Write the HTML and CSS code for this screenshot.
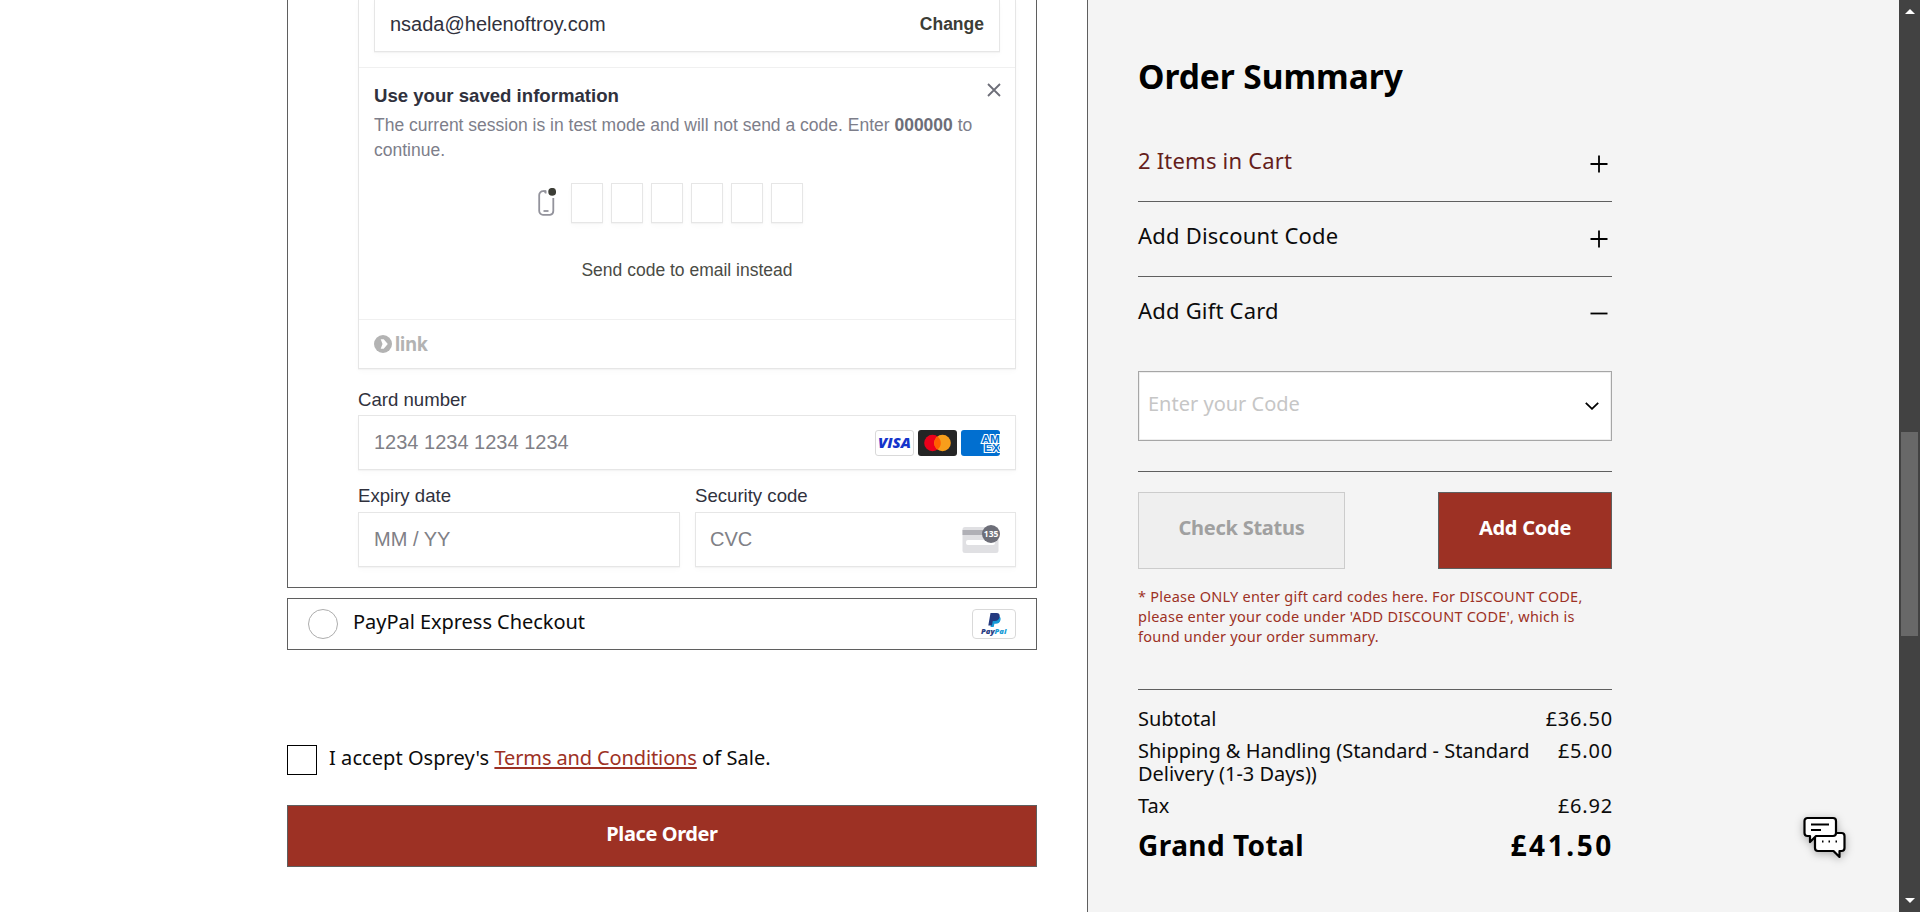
FILE: index.html
```html
<!DOCTYPE html>
<html lang="en">
<head>
<meta charset="utf-8">
<title>Checkout</title>
<link rel="stylesheet" href="styles.css">
</head>
<body>
<main class="checkout">
  <section class="method method-card">
    <div class="link-box">
      <div class="link-email">
        <div class="email-field"><span>nsada@helenoftroy.com</span><b class="change">Change</b></div>
      </div>
      <div class="link-verify">
        <svg class="close" viewBox="0 0 14 14"><path d="M1 1l12 12M13 1L1 13"/></svg>
        <h3>Use your saved information</h3>
        <p>The current session is in test mode and will not send a code. Enter <b>000000</b> to continue.</p>
        <div class="code-row">
          <svg class="phone" viewBox="0 0 18 28"><path d="M8 3.2H5A3.8 3.8 0 0 0 1.2 7v16A3.8 3.8 0 0 0 5 26.800h7A3.800 3.800 0 0 0 15.300 23V10"/><path d="M5 2.500h3.500v3H7z" class="phone-fill"/><path d="M5.500 23h5"/><circle cx="14.200" cy="3.800" r="3.900"/></svg>
          <i></i><i></i><i></i><i></i><i></i><i></i>
        </div>
        <div class="send">Send code to email instead</div>
      </div>
      <div class="link-foot">
        <svg viewBox="0 0 56 20"><circle cx="9" cy="9" r="9"/><path d="M6.700 4.200h3L13.800 9l-4.100 4.800h-3L8.500 9z"/><text x="21" y="16" textLength="33" lengthAdjust="spacingAndGlyphs">link</text></svg>
      </div>
    </div>
    <label class="first">Card number</label>
    <div class="field">
      <span>1234 1234 1234 1234</span>
      <div class="brands">
        <svg viewBox="0 0 39 26"><rect x=".5" y=".5" width="38" height="25" rx="2.500" fill="#fff" stroke="#d9d9d9"/><text class="visa" x="3" y="18" textLength="33" lengthAdjust="spacingAndGlyphs">VISA</text></svg>
        <svg viewBox="0 0 39 26"><rect width="39" height="26" rx="3" fill="#252525"/><circle cx="14.500" cy="13" r="8.300" fill="#eb001b"/><circle cx="24.500" cy="13" r="8.300" fill="#f79e1b"/><path d="M19.500 6.400a8.300 8.300 0 0 1 0 13.200a8.300 8.300 0 0 1 0-13.200z" fill="#ff5f00"/></svg>
        <svg viewBox="0 0 39 26"><rect width="39" height="26" rx="3" fill="#016fd0"/><g class="amex"><text x="20.500" y="12.600" textLength="18.300" lengthAdjust="spacingAndGlyphs">AM</text><text x="23" y="21.600" textLength="16" lengthAdjust="spacingAndGlyphs">EX</text></g></svg>
      </div>
    </div>
    <div class="split">
      <div><label>Expiry date</label><div class="field"><span>MM / YY</span></div></div>
      <div><label>Security code</label><div class="field"><span class="cvc-text">CVC</span>
        <svg class="cvc" viewBox="0 0 38 28"><rect x=".5" y="2" width="36" height="26" rx="2.500" fill="#e0e0e3"/><rect x=".5" y="5" width="36" height="5" fill="#b0b0b6"/><rect x="4" y="15" width="29" height="5" rx="2" fill="#fff"/><circle cx="29" cy="9" r="9" fill="#6d6e78"/><text x="21.800" y="12.300" textLength="14.500" lengthAdjust="spacingAndGlyphs">135</text></svg>
      </div></div>
    </div>
  </section>
  <section class="method method-paypal">
    <span class="radio"></span>
    <span class="name">PayPal Express Checkout</span>
    <svg class="pp" viewBox="0 0 44 30"><rect x=".5" y=".5" width="43" height="29" rx="3.500" fill="#fff" stroke="#d9d9d9"/><path d="M20.500 7h5c2.700 0 3.500 1.800 3 4-.6 2.800-2.400 3.800-4.600 3.800h-1.500l-.7 3.200h-3.200z" fill="#179bd7"/><path d="M18.500 4h6c2.600 0 3.500 1.600 3.100 3.900-.5 2.700-2.200 4-4.800 4h-2l-.9 4.500h-3.600z" fill="#253b80"/><text x="9" y="24.500" textLength="25.500" lengthAdjust="spacingAndGlyphs" fill="#253b80">Pay<tspan fill="#179bd7">Pal</tspan></text></svg>
  </section>
  <div class="accept"><span class="check"></span><span class="terms">I accept Osprey's <a>Terms and Conditions</a> of Sale.</span></div>
  <button class="place">Place Order</button>
</main>
<aside class="summary">
  <h2><span>Order Summary</span></h2>
  <div class="row cart"><span>2 Items in Cart</span><svg viewBox="0 0 18 18"><path d="M.5 9h17M9 .5v17"/></svg></div>
  <div class="row"><span>Add Discount Code</span><svg viewBox="0 0 18 18"><path d="M.5 9h17M9 .5v17"/></svg></div>
  <div class="row gift"><span>Add Gift Card</span><svg viewBox="0 0 18 18"><path d="M.5 8.500h17"/></svg></div>
  <div class="code-input"><span>Enter your Code</span><svg viewBox="0 0 14 8"><path d="M.8.8L7 6.800 13.200.8"/></svg></div>
  <div class="actions">
    <button class="status">Check Status</button>
    <button class="add">Add Code</button>
  </div>
  <p class="note">* Please ONLY enter gift card codes here. For DISCOUNT CODE,<br>please enter your code under 'ADD DISCOUNT CODE', which is<br>found under your order summary.</p>
  <div class="totals">
    <div><span>Subtotal</span><span class="price">£36.50</span></div>
    <div><span>Shipping &amp; Handling (Standard - Standard<br>Delivery (1-3 Days))</span><span class="price">£5.00</span></div>
    <div><span>Tax</span><span class="price">£6.92</span></div>
    <div class="grand"><span>Grand Total</span><span class="price">£41.50</span></div>
  </div>
  <svg class="chat" viewBox="0 0 48 48"><path d="M17 18h20.500a3 3 0 0 1 3 3v12a3 3 0 0 1-3 3h-2v6l-6-6H14a3 3 0 0 1-3-3V21z"/><path d="M3.500 3H29a3 3 0 0 1 3 3v12a3 3 0 0 1-3 3H12l-6 6v-6H3.500a3 3 0 0 1-3-3V6a3 3 0 0 1 3-3z"/><path d="M7 9.500h18M7 15h10M18 26.500h1.500M24.500 26.500h1.500M31.500 26.500H33" class="lines"/></svg>
</aside>
<div class="scrollbar"><i class="up"></i><i class="thumb"></i><i class="down"></i></div>
</body>
</html>
```
FILE: styles.css
```css
* { box-sizing: border-box; }
body { margin: 0; height: 912px; overflow: hidden; display: flex; background: #fff; color: #0c0c0c; font-family: "Noto Sans", sans-serif; font-size: 20px; }
h2, h3, p { margin: 0; }
button { font: inherit; padding: 0; border-radius: 0; }
svg { display: block; flex: none; }

.checkout { width: 1087px; flex: none; padding: 0 50px 0 287px; }
.method { border: 1px solid #5f5f5f; }
.method-card { height: 588px; border-top: 0; padding: 0 20px 0 70px; font-family: "Liberation Sans", Arial, sans-serif; font-weight: 400; color: #30313d; }
.link-box { height: 369px; border: 1px solid #e6e6e6; border-top: 0; box-shadow: 0 1px 1px rgba(0,0,0,.03), 0 3px 6px rgba(0,0,0,.02); }
.link-email { height: 68px; padding: 0 15px; border-bottom: 1px solid #f0f0f0; }
.email-field { height: 52px; border: 1px solid #e6e6e6; border-top: 0; box-shadow: 0 1px 1px rgba(0,0,0,.03), 0 3px 6px rgba(0,0,0,.02); display: flex; justify-content: space-between; padding: 12px 15px 0; line-height: 24px; }
.change { font-size: 17.5px; color: #3c3d36; }
.link-verify { position: relative; height: 252px; padding: 16px 15px 0; border-bottom: 1px solid #f0f0f0; }
.close { position: absolute; right: 14px; top: 15px; width: 14px; height: 14px; fill: none; stroke: #6d6e78; stroke-width: 1.8; }
.link-verify h3 { font-size: 18.6px; line-height: 24px; }
.link-verify p { margin-top: 5px; font-size: 17.5px; line-height: 25px; color: #7d7e8a; }
.link-verify p b { color: #6d6e78; }
.code-row { display: flex; gap: 8px; margin: 20px 0 0 164px; height: 40px; }
.code-row i { width: 32px; border: 1px solid #e6e6e6; box-shadow: 0 1px 1px rgba(0,0,0,.03), 0 3px 6px rgba(0,0,0,.02); }
.phone { width: 18px; height: 28px; margin: 5px 7px 0 0; fill: none; stroke: #93939c; stroke-width: 1.8; }
.phone circle { fill: #3c3d36; stroke: none; }
.phone .phone-fill { fill: #93939c; stroke: none; }
.send { margin-top: 35px; text-align: center; font-size: 17.5px; line-height: 24px; color: #4a4b45; }
.link-foot { padding: 15px 15px 0; }
.link-foot svg { width: 56px; height: 20px; overflow: visible; fill: #b3b3b3; }
.link-foot path { fill: #fff; }
.link-foot text { font: 700 19.5px Inter, sans-serif; }
.method-card label { display: block; margin: 14px 0 4px; font-size: 18.6px; line-height: 24px; }
.method-card .first { margin: 19px 0 3px; }
.field { height: 55px; border: 1px solid #e6e6e6; box-shadow: 0 1px 1px rgba(0,0,0,.03), 0 3px 6px rgba(0,0,0,.02); padding: 0 15px; display: flex; align-items: center; justify-content: space-between; color: #808086; }
.brands { display: flex; gap: 4px; }
.brands svg { width: 39px; height: 26px; }
.visa { font: italic 800 14px "Open Sans", sans-serif; fill: #1434cb; }
.amex { font: bold 10.5px "Liberation Sans", sans-serif; fill: #016fd0; stroke: #fff; stroke-width: 2; paint-order: stroke; }
.split { display: grid; grid-template-columns: 322px 321px; gap: 15px; }
.cvc-text { margin-left: -1px; }
.cvc { width: 38px; height: 28px; margin-top: -2px; }
.cvc text { font: bold 9.5px "Open Sans", sans-serif; fill: #fff; }
.method-paypal { height: 52px; margin-top: 10px; display: flex; align-items: flex-start; padding: 10px 20px 0; }
.radio { width: 30px; height: 30px; border: 1px solid #adadad; border-radius: 50%; }
.name { margin: 1px 0 0 15px; flex: 1; line-height: 24px; letter-spacing: -.04px; }
.pp { width: 44px; height: 30px; }
.pp text { font: italic 800 7.5px "Open Sans", sans-serif; }
.accept { display: flex; margin-top: 95px; }
.check { width: 30px; height: 30px; border: 1px solid #000; margin-right: 12px; }
.terms { padding-top: 1px; line-height: 24px; letter-spacing: .06px; }
.terms a { color: #9d3124; letter-spacing: -.12px; text-decoration: underline; text-decoration-thickness: 2px; text-underline-offset: 2px; }
.place { display: block; width: 750px; height: 62px; margin-top: 30px; padding-bottom: 5px; border: 1px solid #5f5f5f; background: #9d3124; color: #fff; font-weight: 700; letter-spacing: -.4px; }

.summary { position: relative; width: 812px; flex: none; border-left: 1px solid #5f5f5f; background: #f4f4f4; padding: 54px 287px 0 50px; }
.summary h2 { font-size: 33.5px; line-height: 44px; font-weight: 700; color: #000; letter-spacing: -.05px; margin-bottom: 29px; }
.row { height: 75px; border-bottom: 1px solid #5f5f5f; display: flex; justify-content: space-between; padding: 18px 4px 0 0; font-size: 22px; line-height: 30px; letter-spacing: .2px; }
.row svg { width: 18px; height: 18px; margin-top: 10px; stroke: #000; stroke-width: 1.8; }
.cart { color: #64201a; }
.gift { height: 94px; border: 0; }
.code-input { height: 70px; border: 1px solid #a6a6a6; box-shadow: inset 0 0 0 1px #eee; background: #fff; display: flex; align-items: center; justify-content: space-between; padding: 0 12px 0 9px; color: #c6c6c6; font-weight: 400; }
.code-input span { padding-bottom: 5px; }
.code-input svg { width: 14px; height: 8px; fill: none; stroke: #000; stroke-width: 1.8; }
.actions { margin-top: 30px; border-top: 1px solid #5f5f5f; padding-top: 20px; display: flex; justify-content: space-between; }
.actions button { height: 77px; font-weight: 700; letter-spacing: -.25px; padding-bottom: 7px; }
.status { width: 207px; border: 1px solid #ccc; background: #efefef; color: #a0a0a0; }
.actions .add { width: 174px; border: 1px solid #5f5f5f; background: #9d3124; color: #fff; }
.note { margin-top: 17px; font-size: 14.5px; line-height: 20px; letter-spacing: .25px; color: #9d3124; white-space: nowrap; }
.totals { margin-top: 43px; border-top: 1px solid #5f5f5f; padding-top: 17px; line-height: 23px; letter-spacing: -.03px; display: grid; gap: 9px; }
.totals div { display: flex; justify-content: space-between; white-space: nowrap; }
.price { letter-spacing: .8px; margin-right: -1px; }
.totals .grand { margin-top: 3px; font-size: 28px; line-height: 32px; font-weight: 700; color: #000; letter-spacing: .45px; }
.grand .price { letter-spacing: 2.6px; margin-right: -2px; }
.chat { position: absolute; left: 716px; top: 815px; width: 48px; height: 48px; overflow: visible; fill: #fff; stroke: #000; stroke-width: 2.2; stroke-linejoin: round; filter: drop-shadow(0 2px 4px rgba(0,0,0,.3)); }
.scrollbar { position: relative; width: 21px; flex: none; background: #424242; }
.scrollbar i { position: absolute; left: 6px; }
.scrollbar .up { top: 9px; border: 5px solid transparent; border-top: 0; border-bottom: 5px solid #fff; }
.scrollbar .down { bottom: 9px; border: 5px solid transparent; border-bottom: 0; border-top: 5px solid #fff; }
.scrollbar .thumb { left: 2px; top: 432px; width: 17px; height: 204px; background: #686868; }
```
